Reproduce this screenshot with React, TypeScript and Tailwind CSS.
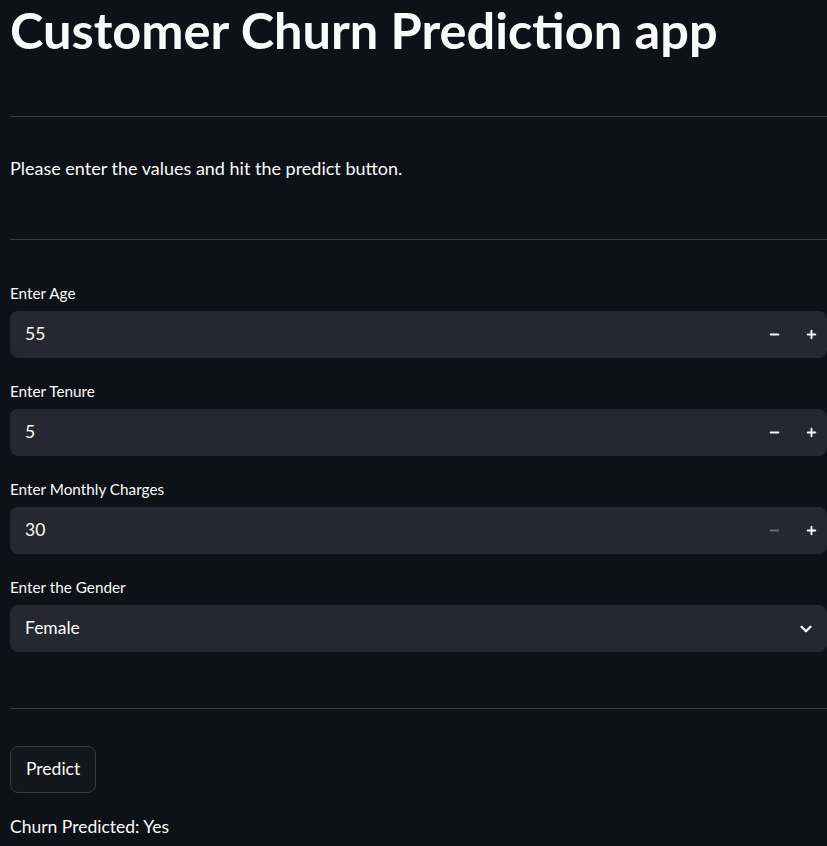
import { ChevronDown, Minus, Plus } from "lucide-react";

const FONT = "font-['Lato','Noto_Sans',sans-serif]";

function Divider() {
  return <hr className="border-0 border-t border-[#3a3b42] m-0" />;
}

function FieldLabel({ children }: { children: React.ReactNode }) {
  return (
    <label className="text-[15.3px] text-[#fafafa] h-[24px] leading-[24px] mb-[6px]">
      {children}
    </label>
  );
}

function NumberField({
  label,
  value,
  minusDim = false,
}: {
  label: string;
  value: string;
  minusDim?: boolean;
}) {
  return (
    <div className="flex flex-col">
      <FieldLabel>{label}</FieldLabel>
      <div className="h-[47px] rounded-[8px] bg-[#262730] flex items-center pl-[15px]">
        <span className="flex-1 text-[17.5px] text-[#fafafa]">{value}</span>
        <button
          type="button"
          className={`w-[42px] h-full flex items-center justify-center ${
            minusDim ? "text-[#6b6c75]" : "text-[#fafafa]"
          }`}
        >
          <Minus className="size-[13px]" strokeWidth={3.5} />
        </button>
        <button
          type="button"
          className="w-[32px] h-full flex items-center justify-center text-[#fafafa]"
        >
          <Plus className="size-[13px]" strokeWidth={3.5} />
        </button>
      </div>
    </div>
  );
}

export default function App() {
  return (
    <div className={`min-h-screen bg-[#0e1117] text-[#fafafa] pl-[10px] overflow-hidden ${FONT}`}>
      <h1 className="text-[50.5px] font-bold leading-[60px] m-0 whitespace-nowrap">
        Customer Churn Prediction app
      </h1>
      <div className="pt-[56px]">
        <Divider />
      </div>
      <p className="text-[18px] mt-[38px] leading-[26px]">
        Please enter the values and hit the predict button.
      </p>
      <div className="pt-[58px]">
        <Divider />
      </div>
      <div className="flex flex-col gap-[21px] mt-[41px]">
        <NumberField label="Enter Age" value="55" />
        <NumberField label="Enter Tenure" value="5" />
        <NumberField label="Enter Monthly Charges" value="30" minusDim />
        <div className="flex flex-col">
          <FieldLabel>Enter the Gender</FieldLabel>
          <div className="h-[47px] rounded-[8px] bg-[#262730] flex items-center pl-[15px] pr-[12px]">
            <span className="flex-1 text-[17.5px]">Female</span>
            <ChevronDown className="size-[18px]" strokeWidth={3} />
          </div>
        </div>
      </div>
      <div className="pt-[56px]">
        <Divider />
      </div>
      <button
        type="button"
        className="mt-[37px] h-[47px] px-[15px] rounded-[8px] border border-[#3a3b42] bg-[#13161d] text-[17.5px]"
      >
        Predict
      </button>
      <p className="text-[17.5px] mt-[21px] leading-[26px]">Churn Predicted: Yes</p>
    </div>
  );
}
